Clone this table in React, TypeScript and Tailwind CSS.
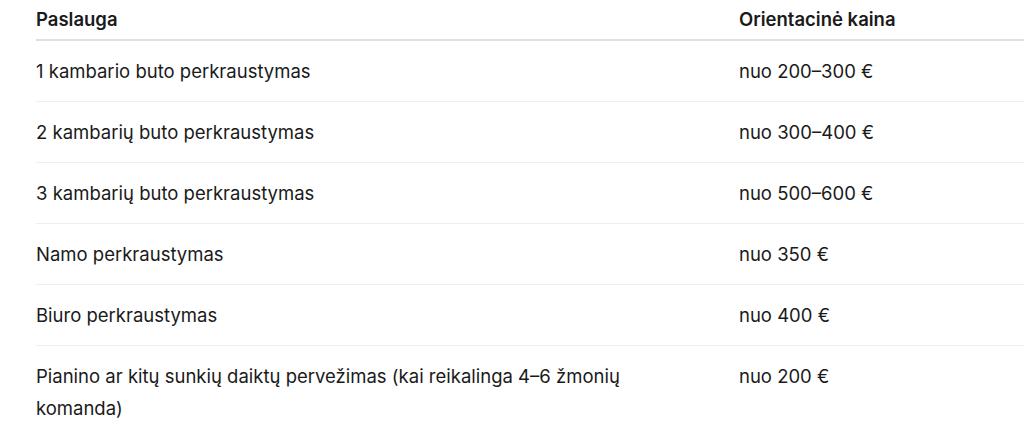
const rows: [string, string][] = [
  ["1 kambario buto perkraustymas", "nuo 200–300 €"],
  ["2 kambarių buto perkraustymas", "nuo 300–400 €"],
  ["3 kambarių buto perkraustymas", "nuo 500–600 €"],
  ["Namo perkraustymas", "nuo 350 €"],
  ["Biuro perkraustymas", "nuo 400 €"],
  ["Pianino ar kitų sunkių daiktų pervežimas (kai reikalinga 4–6 žmonių komanda)", "nuo 200 €"],
];

export default function App() {
  return (
    <div className="bg-white min-h-[427px] pl-[36px] font-['Inter',sans-serif] text-[#1a1a1a] overflow-hidden">
      <table className="w-[1100px] border-collapse text-left text-[18.5px] leading-[32px]">
        <thead>
          <tr className="border-b-2 border-[#e0e0e0]">
            <th className="w-[703px] pt-[3px] pb-[4px] pr-6 font-semibold">Paslauga</th>
            <th className="pt-[3px] pb-[4px] font-semibold">Orientacinė kaina</th>
          </tr>
        </thead>
        <tbody>
          {rows.map(([service, price], i) => (
            <tr key={i} className={i < rows.length - 1 ? "border-b border-[#efefef]" : ""}>
              <td className="py-[14px] pr-[90px] align-top">{service}</td>
              <td className="py-[14px] align-top">{price}</td>
            </tr>
          ))}
        </tbody>
      </table>
    </div>
  );
}
